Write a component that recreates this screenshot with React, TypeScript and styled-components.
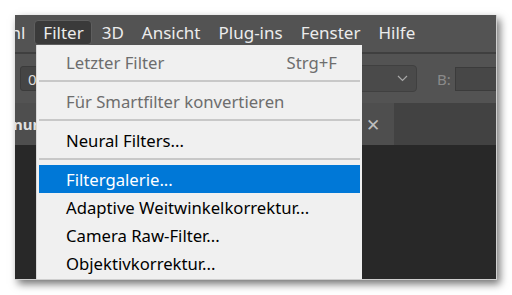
import React from "react";
import styled, { createGlobalStyle } from "styled-components";

const Global = createGlobalStyle`
  html, body { margin: 0; padding: 0; background: #ffffff; }
  body { font-family: "Noto Sans", "Open Sans", sans-serif; }
`;

const Page = styled.div`
  width: 512px;
  height: 295px;
  padding: 15px 0 0 15px;
  box-sizing: border-box;
`;

const Frame = styled.div`
  position: relative;
  width: 482px;
  height: 265px;
  box-sizing: border-box;
  border-right: 1px solid #cfcfcf;
  border-bottom: 1px solid #cfcfcf;
  background: #282828;
  box-shadow: 3px 4px 8px rgba(0, 0, 0, 0.55);
  display: flex;
  flex-direction: column;
  overflow: hidden;
`;

const MenuBar = styled.div`
  height: 37px;
  flex: none;
  background: #535353;
  display: flex;
  align-items: center;
  gap: 1px;
  overflow: hidden;
  font-size: 17px;
  color: #ececec;
`;

const MenuItem = styled.div<{ $active?: boolean; $shift?: number }>`
  height: 25px;
  padding: 0 7px 0 8px;
  margin-top: -2px;
  margin-left: ${(p) => (p.$shift ? `${p.$shift}px` : "0")};
  display: flex;
  align-items: center;
  box-sizing: border-box;
  border-radius: 4px;
  white-space: nowrap;
  background: ${(p) => (p.$active ? "#3a3a3a" : "transparent")};
  border: 1px solid ${(p) => (p.$active ? "#5e5e5e" : "transparent")};
`;

const Toolbar = styled.div`
  height: 51px;
  flex: none;
  background: #535353;
  border-top: 2px solid #3f3f3f;
  box-sizing: border-box;
  display: flex;
  align-items: center;
`;

const SmallInput = styled.div`
  margin-left: 5px;
  width: 40px;
  height: 25px;
  box-sizing: border-box;
  background: #454545;
  border: 1px solid #3b3b3b;
  border-radius: 3px;
  color: #dcdcdc;
  font-size: 15px;
  display: flex;
  align-items: center;
  padding-left: 7px;
`;

const Select = styled.div`
  margin-left: 277px;
  width: 80px;
  height: 27px;
  box-sizing: border-box;
  background: #4a4a4a;
  border: 1px solid #404040;
  border-radius: 4px;
  display: flex;
  align-items: center;
  justify-content: flex-end;
  padding-right: 8px;
`;

const Label = styled.div`
  margin-left: 20px;
  color: #8a8a8a;
  font-size: 15px;
`;

const WideInput = styled.div`
  margin-left: 4px;
  flex: 1;
  height: 24px;
  box-sizing: border-box;
  background: #474747;
  border: 1px solid #3b3b3b;
  border-right: none;
`;

const TabBar = styled.div`
  height: 42px;
  flex: none;
  background: #424242;
  display: flex;
`;

const Tab = styled.div`
  width: 379px;
  background: #4e4e4e;
  display: flex;
  align-items: center;
  justify-content: space-between;
  padding-right: 14px;
  box-sizing: border-box;
  color: #e0e0e0;
  font-size: 15px;
  font-weight: 700;
`;

const TabTitle = styled.span`
  margin-left: -2px;
`;

const Close = styled.span`
  color: #bdbdbd;
  font-size: 17px;
  font-weight: 400;
`;

const Canvas = styled.div`
  flex: 1;
  background: #282828;
`;

const Dropdown = styled.div`
  position: absolute;
  left: 21px;
  top: 30px;
  width: 326px;
  bottom: 0;
  background: #f0f0f0;
  border-left: 1px solid #d8d8d8;
  box-sizing: border-box;
  padding-top: 3px;
  display: flex;
  flex-direction: column;
  font-size: 16.7px;
`;

const Item = styled.div<{ $disabled?: boolean; $selected?: boolean }>`
  height: 28px;
  flex: none;
  margin: 0 2px;
  padding: 0 23px 0 27px;
  display: flex;
  align-items: center;
  justify-content: space-between;
  white-space: nowrap;
  color: ${(p) => (p.$selected ? "#ffffff" : p.$disabled ? "#6d6d6d" : "#000000")};
  background: ${(p) => (p.$selected ? "#0078d7" : "transparent")};
`;

const Separator = styled.div`
  flex: none;
  height: 2px;
  margin: 4px 2px 5px 2px;
  background: #c8c8c8;
`;

const Chevron = () => (
  <svg width="11" height="7" viewBox="0 0 11 7">
    <path d="M1 1 L5.5 5.5 L10 1" fill="none" stroke="#a8a8a8" strokeWidth="1.2" />
  </svg>
);

export default function App() {
  return (
    <>
      <Global />
      <Page>
        <Frame>
          <MenuBar>
            <MenuItem $shift={-66}>Auswahl</MenuItem>
            <MenuItem $active>Filter</MenuItem>
            <MenuItem>3D</MenuItem>
            <MenuItem>Ansicht</MenuItem>
            <MenuItem>Plug-ins</MenuItem>
            <MenuItem>Fenster</MenuItem>
            <MenuItem>Hilfe</MenuItem>
          </MenuBar>
          <Toolbar>
            <SmallInput>0</SmallInput>
            <Select>
              <Chevron />
            </Select>
            <Label>B:</Label>
            <WideInput />
          </Toolbar>
          <TabBar>
            <Tab>
              <TabTitle>nur</TabTitle>
              <Close>✕</Close>
            </Tab>
          </TabBar>
          <Canvas />
          <Dropdown>
            <Item $disabled>
              <span>Letzter Filter</span>
              <span>Strg+F</span>
            </Item>
            <Separator />
            <Item $disabled>Für Smartfilter konvertieren</Item>
            <Separator />
            <Item>Neural Filters...</Item>
            <Separator />
            <Item $selected>Filtergalerie...</Item>
            <Item>Adaptive Weitwinkelkorrektur...</Item>
            <Item>Camera Raw-Filter...</Item>
            <Item>Objektivkorrektur...</Item>
          </Dropdown>
        </Frame>
      </Page>
    </>
  );
}
